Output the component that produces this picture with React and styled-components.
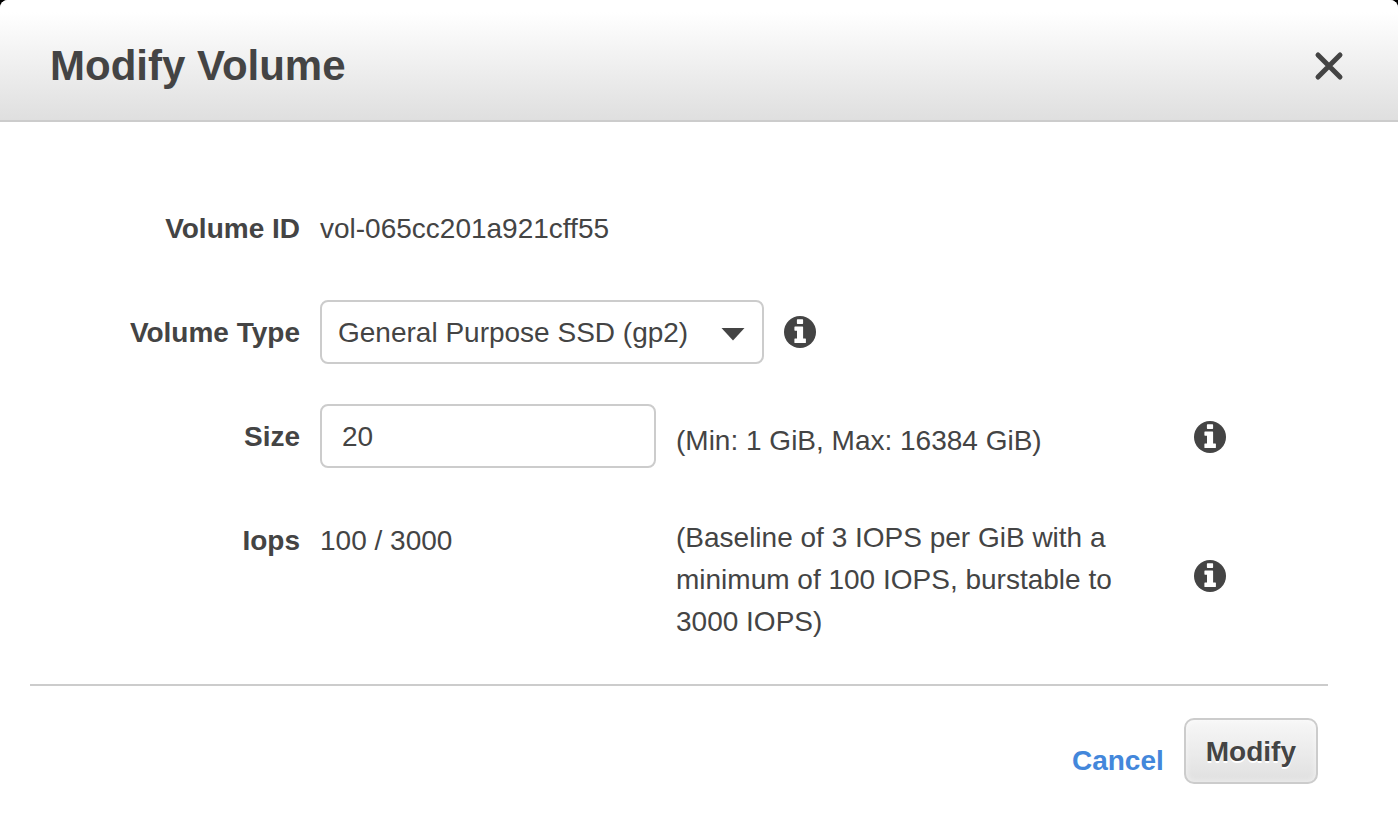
import { useState } from 'react';
import styled, { createGlobalStyle } from 'styled-components';

const GlobalStyle = createGlobalStyle`
  * {
    box-sizing: border-box;
  }
  body {
    margin: 0;
    background: #000;
    color: #444;
    font-family: 'Liberation Sans', Arial, sans-serif;
    font-size: 28px;
    line-height: 42px;
  }
`;

const Dialog = styled.form`
  min-height: 100vh;
  background: #fff;
  border-radius: 8px 8px 0 0;
  overflow: hidden;
`;

const Header = styled.header`
  display: flex;
  justify-content: space-between;
  align-items: center;
  padding: 42px 48px 30px 50px;
  border-bottom: 2px solid #ccc;
  background: linear-gradient(to bottom, #fff 0%, #fff 10%, #dfdfdf 100%);
`;

const Title = styled.h1`
  margin: 0;
  font-size: 42px;
  line-height: 48px;
`;

const CloseButton = styled.button`
  display: flex;
  padding: 4px;
  background: none;
  border: none;
  color: #444;
  cursor: pointer;
`;

const Body = styled.div`
  display: flex;
  flex-direction: column;
  gap: 38px;
  padding: 74px 172px 40px 0;
`;

const Row = styled.div`
  display: grid;
  grid-template-columns: 300px 336px 1fr 32px;
  column-gap: 20px;
  align-items: start;
`;

const Label = styled.label`
  font-weight: bold;
  line-height: 66px;
  text-align: right;
`;

const Value = styled.output`
  line-height: 66px;
`;

const Note = styled.div`
  align-self: center;
  padding: 9px 0 1px;
`;

const SelectCell = styled.div`
  grid-column: 2 / -1;
  display: flex;
  align-items: center;
  gap: 20px;
`;

const SelectWrap = styled.div`
  position: relative;
  width: 444px;
`;

const Select = styled.select`
  appearance: none;
  display: block;
  width: 100%;
  height: 64px;
  padding: 2px 60px 0 16px;
  background: #fff;
  border: 2px solid #ccc;
  border-radius: 8px;
  color: inherit;
  font: inherit;
`;

const Caret = styled.svg`
  position: absolute;
  top: 28px;
  right: 19px;
  pointer-events: none;
`;

const Input = styled.input`
  width: 100%;
  height: 64px;
  padding: 2px 20px 0;
  background: #fff;
  border: 2px solid #ccc;
  border-radius: 8px;
  color: inherit;
  font: inherit;
`;

const InfoButton = styled.button`
  display: flex;
  align-self: center;
  padding: 0;
  background: none;
  border: none;
  color: #444;
  cursor: pointer;
`;

const Footer = styled.footer`
  display: flex;
  justify-content: flex-end;
  align-items: flex-end;
  gap: 20px;
  margin: 0 70px 0 30px;
  padding: 32px 10px 40px;
  border-top: 2px solid #ccc;
`;

const CancelLink = styled.a`
  color: #4387db;
  font-weight: bold;
  line-height: 46px;
  text-decoration: none;
`;

const ModifyButton = styled.button`
  height: 66px;
  padding: 2px 20px 0;
  background: linear-gradient(to bottom, #f7f7f7, #e0e0e0);
  border: 2px solid #ccc;
  border-radius: 10px;
  box-shadow: inset 0 0 6px rgba(255, 255, 255, 0.6);
  color: #444;
  font: inherit;
  font-weight: bold;
  text-shadow: 0 2px 0 #fff;
  cursor: pointer;
`;

function Info({ about }) {
  return (
    <InfoButton type="button" aria-label={`About ${about}`}>
      <svg width="32" height="32" viewBox="0 0 32 32" aria-hidden="true">
        <circle cx="16" cy="16" r="16" fill="currentColor" />
        <path
          fill="#fff"
          d="M13.5 3.300h5a.6.6 0 0 1 .6.6v3.400a.6.6 0 0 1-.6.6h-5a.6.6 0 0 1-.6-.6V3.900a.6.6 0 0 1 .6-.6zM11 10.600h7.500a.6.6 0 0 1 .6.6v11.200h2.200a.6.6 0 0 1 .6.6v3.500a.6.6 0 0 1-.6.6H11a.6.6 0 0 1-.6-.6V23a.6.6 0 0 1 .6-.6h2v-7.700h-2a.6.6 0 0 1-.6-.6v-2.900a.6.6 0 0 1 .6-.6z"
        />
      </svg>
    </InfoButton>
  );
}

function App() {
  const [type, setType] = useState('gp2');
  const [size, setSize] = useState('20');

  return (
    <>
      <GlobalStyle />
      <Dialog onSubmit={(e) => e.preventDefault()}>
        <Header>
          <Title>Modify Volume</Title>
          <CloseButton type="button" aria-label="Close">
            <svg width="34" height="34" viewBox="0 0 34 34" aria-hidden="true">
              <path d="M6 6l22 22M28 6L6 28" stroke="currentColor" strokeWidth="5" strokeLinecap="round" />
            </svg>
          </CloseButton>
        </Header>
        <Body>
          <Row>
            <Label htmlFor="volume-id">Volume ID</Label>
            <Value id="volume-id">vol-065cc201a921cff55</Value>
          </Row>
          <Row>
            <Label htmlFor="volume-type">Volume Type</Label>
            <SelectCell>
              <SelectWrap>
                <Select id="volume-type" value={type} onChange={(e) => setType(e.target.value)}>
                  <option value="gp2">General Purpose SSD (gp2)</option>
                </Select>
                <Caret width="24" height="13" viewBox="0 0 24 13" aria-hidden="true">
                  <path d="M0.500 0h23L12 12.500z" fill="#444" />
                </Caret>
              </SelectWrap>
              <Info about="volume type" />
            </SelectCell>
          </Row>
          <Row>
            <Label htmlFor="size">Size</Label>
            <Input id="size" type="text" value={size} onChange={(e) => setSize(e.target.value)} />
            <Note>(Min: 1 GiB, Max: 16384 GiB)</Note>
            <Info about="size" />
          </Row>
          <Row>
            <Label htmlFor="iops">Iops</Label>
            <Value id="iops">100 / 3000</Value>
            <Note>(Baseline of 3 IOPS per GiB with a minimum of 100 IOPS, burstable to 3000 IOPS)</Note>
            <Info about="IOPS" />
          </Row>
        </Body>
        <Footer>
          <CancelLink href="#">Cancel</CancelLink>
          <ModifyButton type="submit">Modify</ModifyButton>
        </Footer>
      </Dialog>
    </>
  );
}

export default App;
